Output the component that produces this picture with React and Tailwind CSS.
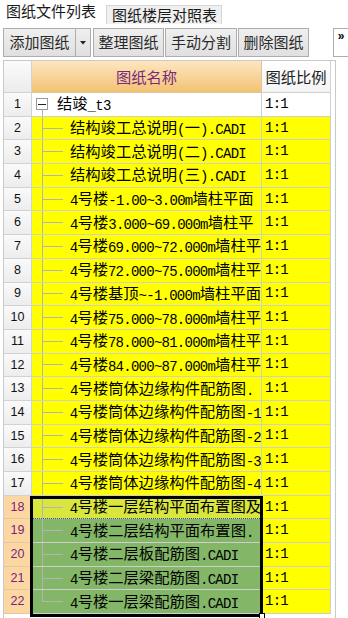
import React from "react";

const rows = [
  "结竣_t3",
  "结构竣工总说明(一).CADI",
  "结构竣工总说明(二).CADI",
  "结构竣工总说明(三).CADI",
  "4号楼-1.00~3.00m墙柱平面",
  "4号楼3.000~69.000m墙柱平",
  "4号楼69.000~72.000m墙柱平",
  "4号楼72.000~75.000m墙柱平",
  "4号楼基顶~-1.000m墙柱平面",
  "4号楼75.000~78.000m墙柱平",
  "4号楼78.000~81.000m墙柱平",
  "4号楼84.000~87.000m墙柱平",
  "4号楼筒体边缘构件配筋图.",
  "4号楼筒体边缘构件配筋图-1",
  "4号楼筒体边缘构件配筋图-2",
  "4号楼筒体边缘构件配筋图-3",
  "4号楼筒体边缘构件配筋图-4",
  "4号楼一层结构平面布置图及",
  "4号楼二层结构平面布置图.",
  "4号楼二层板配筋图.CADI",
  "4号楼二层梁配筋图.CADI",
  "4号楼一层梁配筋图.CADI",
];

function T({ s }) {
  const parts = s.split(/([\x20-\x7e]+)/).filter((p) => p.length);
  return (
    <span className="leading-[20px]">
      {parts.map((p, i) =>
        /^[\x20-\x7e]+$/.test(p) ? (
          <span
            key={i}
            className="font-['Liberation_Mono',monospace] text-[14px] tracking-[-0.75px] align-[-1px]"
          >
            {p}
          </span>
        ) : (
          <span key={i}>{p}</span>
        )
      )}
    </span>
  );
}

function Btn({ children, className = "" }) {
  return (
    <div
      className={
        "h-[29px] flex items-center justify-center border border-[#adadad] bg-gradient-to-b from-[#efefef] to-[#e0e0e0] text-[15px] text-[#2a2a2a] " +
        className
      }
    >
      {children}
    </div>
  );
}

export default function App() {
  return (
    <div className="w-[348px] h-[618px] relative overflow-hidden bg-white font-['Noto_Sans_CJK_SC',sans-serif] text-black">
      {/* tabs */}
      <div className="h-[24px] flex items-start">
        <div className="w-[106px] h-[24px] pl-[6px] pt-[1px] text-[15px] leading-[20px] text-[#1a1a1a]">
          图纸文件列表
        </div>
        <div className="mt-[5px] h-[19px] w-[116px] border border-b-0 border-[#d6d6d6] bg-[#f0f0f0] pl-[5px] text-[15px] leading-[17px] text-[#1a1a1a]">
          图纸楼层对照表
        </div>
      </div>

      {/* toolbar */}
      <div className="h-[36px] flex items-start pt-[4px] pl-[3px]">
        <Btn className="w-[73px]">添加图纸</Btn>
        <Btn className="w-[15px] border-l-0">
          <svg width="6" height="4" viewBox="0 0 6 4">
            <path d="M0 0H6L3 3.5Z" fill="#222" />
          </svg>
        </Btn>
        <div className="w-[2px]" />
        <Btn className="w-[71px]">整理图纸</Btn>
        <div className="w-[1px]" />
        <Btn className="w-[72px]">手动分割</Btn>
        <div className="w-[1px]" />
        <Btn className="w-[71px]">删除图纸</Btn>
        <div className="ml-auto w-[15px] h-[29px] border border-r-0 border-[#adadad] bg-white flex justify-center">
          <span className="text-[12px] font-bold leading-[14px] font-['Liberation_Sans',sans-serif]">»</span>
        </div>
      </div>

      {/* grid */}
      <div className="ml-[3px] w-[333px] h-[560px] border-t border-l border-r border-[#c9c9c9]">
        {/* header */}
        <div className="h-[32px] flex">
          <div className="w-[28px] border-r border-b border-[#d2d2d2] bg-gradient-to-b from-[#fbfbfb] to-[#ececec]" />
          <div className="w-[230px] border-r border-b border-[#d8c6a4] bg-gradient-to-b from-[#fde6c0] to-[#f3c272] flex items-center justify-center text-[15.3px] text-[#7a2a7c]">
            图纸名称
          </div>
          <div className="w-[69px] border-r border-b border-[#d2d2d2] bg-gradient-to-b from-[#ffffff] to-[#f4f4f4] flex items-center justify-center text-[15.3px] text-[#222]">
            图纸比例
          </div>
          <div className="flex-1" />
        </div>

        {rows.map((t, i) => {
          const n = i + 1;
          const sel = n >= 18;
          const last = n === rows.length;
          let nameBg = "bg-[#ffff00]";
          if (n === 1) nameBg = "bg-white";
          else if (n === 18) nameBg = "bg-[#d8e63e]";
          else if (n > 18) nameBg = "bg-[#83b767]";
          const ratioBg = n === 1 ? "bg-white" : "bg-[#ffff00]";
          const nameBorder =
            n === 18
              ? "border-b border-dotted border-b-[#3b3bff]"
              : "border-b border-[#cfcfcf]";
          return (
            <div key={n} className="h-[23.7px] flex">
              <div
                className={
                  "w-[28px] border-r border-b flex items-center justify-center text-[12.5px] font-['Liberation_Sans',sans-serif] " +
                  (sel
                    ? "bg-[#fdd7a2] border-[#e2c9a4] text-[#7a1f7e]"
                    : "bg-gradient-to-b from-[#fafafa] to-[#ededed] border-[#d2d2d2] text-[#111]")
                }
              >
                {n}
              </div>
              <div
                className={
                  "w-[230px] border-r border-r-[#cfcfcf] flex items-stretch overflow-hidden whitespace-nowrap text-[15.3px] " +
                  nameBg +
                  " " +
                  nameBorder
                }
              >
                {n === 1 ? (
                  <>
                    <div className="ml-[4px] w-[12px] flex flex-col items-center">
                      <div className="flex-1" />
                      <div className="w-[12px] h-[12px] border border-[#9a9a9a] bg-white flex items-center justify-center">
                        <div className="w-[8px] h-px bg-[#222]" />
                      </div>
                      <div className="flex-1 w-px bg-[#b4b4b4]" />
                    </div>
                    <div className="ml-[9px] flex items-center">
                      <T s={t} />
                    </div>
                  </>
                ) : (
                  <>
                    <div className="ml-[10px] w-[21px] flex flex-col">
                      <div className="flex-1 border-l border-b border-[#b4b4b4]" />
                      <div
                        className={
                          "flex-1 " + (last ? "" : "border-l border-[#b4b4b4]")
                        }
                      />
                    </div>
                    <div className="ml-[7px] flex items-center">
                      <T s={t} />
                    </div>
                  </>
                )}
              </div>
              <div
                className={
                  "w-[69px] border-r border-b border-[#cfcfcf] flex items-center pl-[3px] " +
                  ratioBg
                }
              >
                <span className="font-['Liberation_Mono',monospace] text-[14px] tracking-[-0.75px]">1:1</span>
              </div>
              <div className="flex-1" />
            </div>
          );
        })}
      </div>

      {/* selection frame */}
      <div className="absolute left-[30px] top-[496px] w-[233px] h-[121px] border-[3px] border-black pointer-events-none" />
      <div className="absolute left-[259px] top-[613px] w-[6px] h-[6px] bg-white border border-black" />
    </div>
  );
}
